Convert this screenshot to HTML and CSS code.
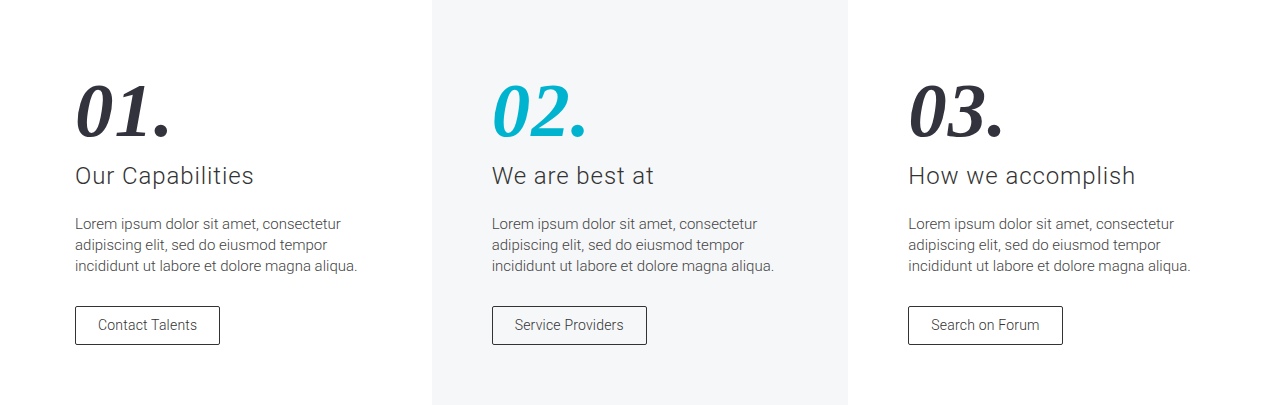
FILE: index.html
```html
<!DOCTYPE html>
<html lang="en">
<head>
<meta charset="utf-8">
<title>Features</title>
<link rel="stylesheet" href="styles.css">
</head>
<body>
<section class="features">
  <div class="feature">
    <div class="num">01.</div>
    <h3 class="title">Our Capabilities</h3>
    <p class="text">Lorem ipsum dolor sit amet, consectetur adipiscing elit, sed do eiusmod tempor incididunt ut labore et dolore magna aliqua.</p>
    <a class="btn" href="#">Contact Talents</a>
  </div>
  <div class="feature alt">
    <div class="num accent">02.</div>
    <h3 class="title">We are best at</h3>
    <p class="text">Lorem ipsum dolor sit amet, consectetur adipiscing elit, sed do eiusmod tempor incididunt ut labore et dolore magna aliqua.</p>
    <a class="btn" href="#">Service Providers</a>
  </div>
  <div class="feature">
    <div class="num">03.</div>
    <h3 class="title">How we accomplish</h3>
    <p class="text">Lorem ipsum dolor sit amet, consectetur adipiscing elit, sed do eiusmod tempor incididunt ut labore et dolore magna aliqua.</p>
    <a class="btn" href="#">Search on Forum</a>
  </div>
</section>
</body>
</html>
```
FILE: styles.css
```css
* { box-sizing: border-box; }
html, body { margin: 0; padding: 0; background: #fff; }
body { font-family: Roboto, "Liberation Sans", sans-serif; color: #333; }
.features {
  display: grid;
  grid-template-columns: repeat(3, 1fr);
  padding: 0 15px;
  height: 405px;
}
.feature {
  padding: 70px 60px 0 60px;
  display: flex;
  flex-direction: column;
  align-items: flex-start;
}
.feature.alt { background: #f6f7f9; }
.num {
  font-family: "Liberation Serif", "DejaVu Serif", serif;
  font-weight: 700;
  font-style: italic;
  font-size: 77px;
  line-height: 80px;
  letter-spacing: 1px;
  color: #33333d;
}
.num.accent { color: #00b4d0; }
.title {
  margin: 10px 0 0;
  font-weight: 300;
  font-size: 24px;
  line-height: 32px;
  color: #333;
  letter-spacing: 0.9px;
}
.text {
  margin: 22px 0 0;
  font-weight: 300;
  font-size: 15px;
  line-height: 21px;
  color: #444;
  max-width: 300px;
}
.btn {
  margin-top: 29px;
  display: inline-block;
  padding: 0 22px;
  height: 39px;
  line-height: 37px;
  border: 1px solid #333;
  border-radius: 2px;
  font-size: 14px;
  font-weight: 300;
  letter-spacing: 0.2px;
  color: #333;
  text-decoration: none;
}
```
